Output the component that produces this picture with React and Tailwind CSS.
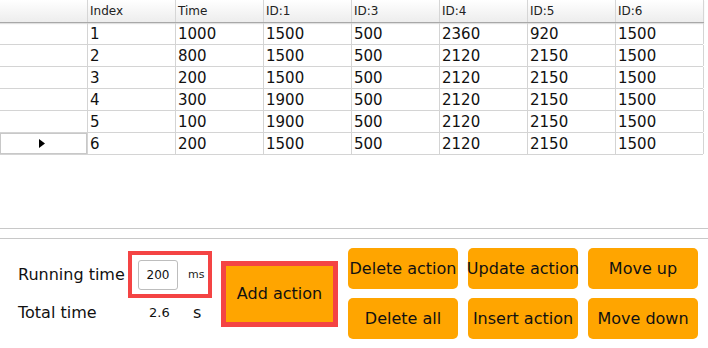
import React from "react";

const columns = ["Index", "Time", "ID:1", "ID:3", "ID:4", "ID:5", "ID:6"];

const rows = [
  ["1", "1000", "1500", "500", "2360", "920", "1500"],
  ["2", "800", "1500", "500", "2120", "2150", "1500"],
  ["3", "200", "1500", "500", "2120", "2150", "1500"],
  ["4", "300", "1900", "500", "2120", "2150", "1500"],
  ["5", "100", "1900", "500", "2120", "2150", "1500"],
  ["6", "200", "1500", "500", "2120", "2150", "1500"],
];

const font = { fontFamily: '"DejaVu Sans", "Liberation Sans", sans-serif' };

function OrangeButton({ children }) {
  return (
    <button className="w-[110px] h-[41px] rounded-[5px] bg-[#ffa500] text-[16px] text-[#111] flex items-center justify-center whitespace-nowrap">
      {children}
    </button>
  );
}

export default function App() {
  return (
    <div className="w-[708px] h-[348px] bg-white overflow-hidden flex flex-col" style={font}>
      {/* table */}
      <div className="h-[228px] flex flex-col">
        <div className="flex h-[23px] w-[704px] bg-gradient-to-b from-white to-[#ededed] border-b border-[#a8a8a8] shadow-[0_1px_1px_rgba(0,0,0,0.12)]">
          <div className="w-[88px] shrink-0 border-r border-[#d6d6d6]" />
          {columns.map((c) => (
            <div
              key={c}
              className="w-[88px] shrink-0 border-r border-[#d6d6d6] pl-[2px] pt-[1px] text-[12px] leading-[20px] text-[#222]"
            >
              {c}
            </div>
          ))}
        </div>
        {rows.map((r, i) => (
          <div key={i} className="flex h-[22px] w-[703px] border-b border-[#d4d4d4]">
            <div
              className={
                "w-[88px] shrink-0 border-r border-[#d4d4d4] flex items-center justify-center " +
                (i === rows.length - 1 ? "shadow-[inset_0_0_0_1px_#c8c8c8]" : "")
              }
            >
              {i === rows.length - 1 && (
                <svg width="6" height="9" viewBox="0 0 6 9" className="ml-[-4px]">
                  <path d="M0 0 L6 4.5 L0 9 Z" fill="#000" />
                </svg>
              )}
            </div>
            {r.map((v, j) => (
              <div
                key={j}
                className="w-[88px] shrink-0 border-r border-[#d4d4d4] pl-[2px] pt-[1px] text-[15px] leading-[20px] text-[#111]"
              >
                {v}
              </div>
            ))}
          </div>
        ))}
      </div>

      {/* separators */}
      <div className="border-t border-[#c8c8c8] h-[10px]" />
      <div className="border-t border-[#c8c8c8]" />

      {/* controls */}
      <div className="flex items-start pt-[9px] pl-[18px]">
        <div className="w-[203px] flex flex-col">
          <div className="flex items-center mt-[3px]">
            <span className="w-[110px] text-[16px] text-[#111] whitespace-nowrap">Running time</span>
            <div className="w-[84px] h-[47px] border-4 border-[#f44444] flex items-center pl-[6px] pt-[1px]">
              <div className="w-[40px] h-[30px] border border-[#bdbdbd] rounded-[3px] flex items-center justify-center text-[12px] text-[#111]">
                200
              </div>
              <span className="ml-[10px] text-[11px] text-[#222]">ms</span>
            </div>
          </div>
          <div className="flex items-center h-[30px]">
            <span className="w-[131px] text-[16px] text-[#111] whitespace-nowrap">Total time</span>
            <span className="w-[44px] text-[13px] text-[#111]">2.6</span>
            <span className="text-[16px] text-[#111]">s</span>
          </div>
        </div>
        <button className="mt-[13px] w-[117px] h-[66px] border-[5px] border-[#f44444] bg-[#ffa500] text-[16px] text-[#111] flex items-center justify-center">
          Add action
        </button>
        <div className="ml-[10px] grid grid-cols-[110px_110px_110px] gap-x-[10px] gap-y-[9px]">
          <OrangeButton>Delete action</OrangeButton>
          <OrangeButton>Update action</OrangeButton>
          <OrangeButton>Move up</OrangeButton>
          <OrangeButton>Delete all</OrangeButton>
          <OrangeButton>Insert action</OrangeButton>
          <OrangeButton>Move down</OrangeButton>
        </div>
      </div>
    </div>
  );
}
